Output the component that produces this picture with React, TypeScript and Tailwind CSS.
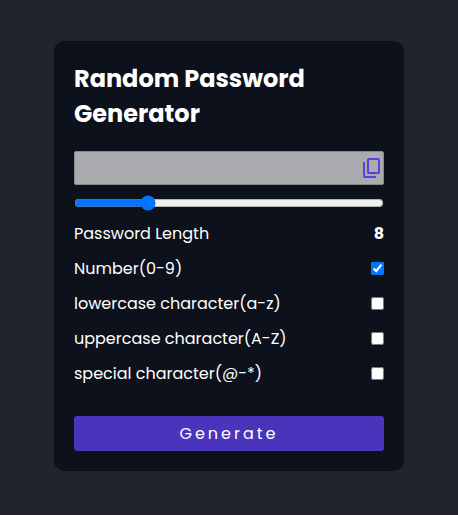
import { useState } from "react";

const options = [
  { label: "Number(0-9)", on: true },
  { label: "lowercase character(a-z)", on: false },
  { label: "uppercase character(A-Z)", on: false },
  { label: "special character(@-*)", on: false },
];

export default function App() {
  const [length, setLength] = useState(8);
  return (
    <main className="flex h-[515px] w-full flex-col items-center border-b border-[#24222c] bg-[#20242f] pt-[41px] font-['Poppins','Inter',sans-serif] text-white">
      <section className="flex h-[430px] w-[350px] flex-col rounded-[10px] bg-[#0c111b] px-5 pt-5">
        <h1 className="text-2xl leading-[35px] font-bold">
          Random Password Generator
        </h1>
        <div className="mt-5 flex h-[34px] items-center justify-end rounded-[2px] border border-[#88898e] bg-[#aaabaf]">
          <svg className="-mr-px size-6 shrink-0" viewBox="0 0 24 24" fill="#5f3fdc">
            <path d="M9 18q-.825 0-1.412-.587T7 16V4q0-.825.588-1.412T9 2h9q.825 0 1.413.588T20 4v12q0 .825-.587 1.413T18 18zm0-2h9V4H9zm-4 6q-.825 0-1.412-.587T3 20V6h2v14h11v2z" />
          </svg>
        </div>
        <input
          type="range"
          min={1}
          max={32}
          value={length}
          onChange={(e) => setLength(Number(e.target.value))}
          className="mt-2.5 h-4 w-full"
        />
        <div className="mt-[5px] flex h-[35px] items-center justify-between text-base">
          <span>Password Length</span>
          <b>{length}</b>
        </div>
        {options.map((o) => (
          <label key={o.label} className="flex h-[35px] items-center justify-between text-base">
            <span>{o.label}</span>
            <input type="checkbox" defaultChecked={o.on} className="size-[13px]" />
          </label>
        ))}
        <button className="mt-[25px] h-[35px] rounded-[3px] bg-[#4a34bb] text-base tracking-[3px]">
          Generate
        </button>
      </section>
    </main>
  );
}
